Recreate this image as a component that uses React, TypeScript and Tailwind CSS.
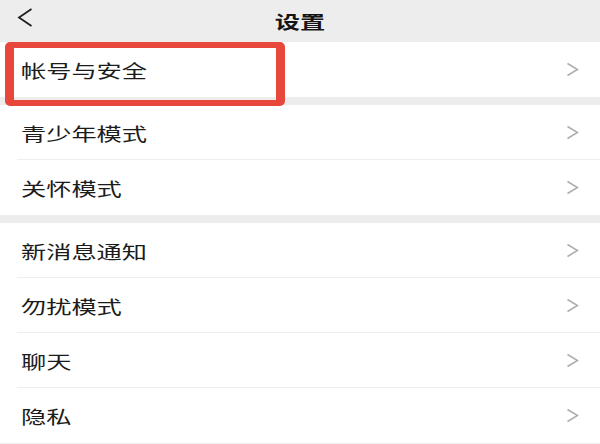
const groups: string[][] = [
  ["帐号与安全"],
  ["青少年模式", "关怀模式"],
  ["新消息通知", "勿扰模式", "聊天", "隐私"],
];

const font = { fontFamily: '"Noto Sans CJK SC", "Noto Sans", sans-serif' };

function Chevron() {
  return (
    <svg width="13" height="15" viewBox="0 0 13 15" fill="none">
      <path d="M1.5 1.5 L11.5 7.5 L1.5 13.5" stroke="#adadad" strokeWidth="1.5" />
    </svg>
  );
}

function Row({ label, divider }: { label: string; divider: boolean }) {
  return (
    <div className="relative flex h-[55px] items-center justify-between pl-[21px] pr-[21px]">
      <span className="inline-block origin-left scale-x-[1.4] text-[18px] leading-none text-[#1b1b1b]">
        {label}
      </span>
      <Chevron />
      {divider && <div className="absolute bottom-0 left-[17px] right-0 h-px bg-[#efefef]" />}
    </div>
  );
}

export default function App() {
  return (
    <div className="relative h-[444px] w-[600px] overflow-hidden bg-[#ededed]" style={font}>
      <div className="relative flex h-[42px] items-center justify-center">
        <svg className="absolute left-[17px] top-[8px]" width="16" height="19" viewBox="0 0 16 19" fill="none">
          <path d="M14.5 1 L2 9.5 L14.5 18" stroke="#1f1f1f" strokeWidth="1.8" />
        </svg>
        <span className="inline-block scale-x-[1.4] text-[18px] font-bold leading-none text-[#151515]">
          设置
        </span>
      </div>
      <div className="flex flex-col gap-[8px]">
        {groups.map((g, i) => (
          <div key={i} className="bg-white">
            {g.map((label, j) => (
              <Row key={label} label={label} divider={j < g.length - 1} />
            ))}
          </div>
        ))}
      </div>
      <div className="absolute left-[5px] top-[42px] h-[64px] w-[280px] rounded-[5px] border-x-[9px] border-y-[6px] border-[#e8473b]" />
    </div>
  );
}
